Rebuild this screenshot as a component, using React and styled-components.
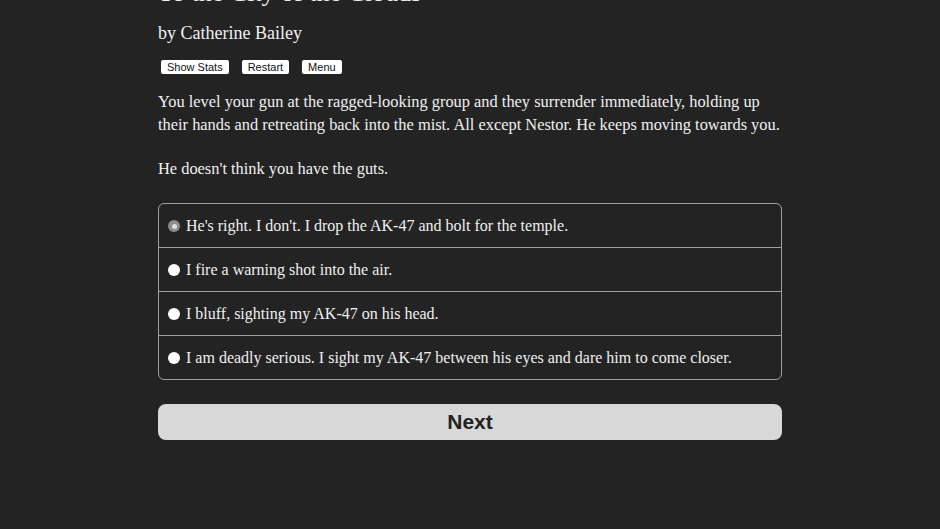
import styled, { createGlobalStyle } from "styled-components";

const GlobalStyle = createGlobalStyle`
  html, body {
    margin: 0;
    padding: 0;
    background: #232323;
  }
`;

const Page = styled.div`
  width: 624px;
  margin: -23px auto 0;
  font-family: "Liberation Serif", "Times New Roman", serif;
  color: #f0f0f0;
`;

const Title = styled.h1`
  margin: 0;
  font-size: 26px;
  font-weight: normal;
  line-height: 32px;
`;

const Author = styled.h2`
  margin: 12px 0 0;
  font-size: 18px;
  font-weight: normal;
  line-height: 24px;
`;

const Toolbar = styled.div`
  display: flex;
  gap: 13px;
  margin: 15px 0 0 3px;
`;

const SmallButton = styled.button`
  font-family: "Liberation Sans", Arial, sans-serif;
  font-size: 11px;
  line-height: 13px;
  padding: 1px 6px 0;
  background: #fff;
  color: #111;
  border: none;
  border-radius: 2px;
`;

const Paragraph = styled.p`
  margin: ${(p) => (p.$first ? "16px" : "21px")} 0 0;
  font-size: 16.4px;
  line-height: 23px;
`;

const Choices = styled.div`
  margin-top: 23px;
  border: 1px solid #a0a0a0;
  border-radius: 6px;
  display: flex;
  flex-direction: column;
`;

const Choice = styled.label`
  display: flex;
  align-items: center;
  gap: 6px;
  height: 43px;
  padding-left: 9px;
  font-size: 16px;
  border-top: ${(p) => (p.$first ? "none" : "1px solid #a0a0a0")};
`;

const Radio = styled.span`
  width: 12px;
  height: 12px;
  border-radius: 50%;
  background: ${(p) => (p.$checked ? "#8c8c8c" : "#fff")};
  display: flex;
  align-items: center;
  justify-content: center;
  margin-top: 1px;

  &::after {
    content: "";
    width: 5px;
    height: 5px;
    border-radius: 50%;
    background: ${(p) => (p.$checked ? "#e0e0e0" : "transparent")};
  }
`;

const NextButton = styled.button`
  display: block;
  width: 100%;
  height: 36px;
  margin-top: 24px;
  border: none;
  border-radius: 8px;
  background: #d8d8d8;
  color: #222;
  font-family: "Liberation Sans", Arial, sans-serif;
  font-weight: bold;
  font-size: 21px;
`;

const choices = [
  "He's right. I don't. I drop the AK-47 and bolt for the temple.",
  "I fire a warning shot into the air.",
  "I bluff, sighting my AK-47 on his head.",
  "I am deadly serious. I sight my AK-47 between his eyes and dare him to come closer.",
];

export default function App() {
  return (
    <>
      <GlobalStyle />
      <Page>
        <Title>To the City of the Clouds</Title>
        <Author>by Catherine Bailey</Author>
        <Toolbar>
          <SmallButton>Show Stats</SmallButton>
          <SmallButton>Restart</SmallButton>
          <SmallButton>Menu</SmallButton>
        </Toolbar>
        <Paragraph $first>
          You level your gun at the ragged-looking group and they surrender
          immediately, holding up their hands and retreating back into the
          mist. All except Nestor. He keeps moving towards you.
        </Paragraph>
        <Paragraph>He doesn't think you have the guts.</Paragraph>
        <Choices>
          {choices.map((c, i) => (
            <Choice key={i} $first={i === 0}>
              <Radio $checked={i === 0} />
              {c}
            </Choice>
          ))}
        </Choices>
        <NextButton>Next</NextButton>
      </Page>
    </>
  );
}
